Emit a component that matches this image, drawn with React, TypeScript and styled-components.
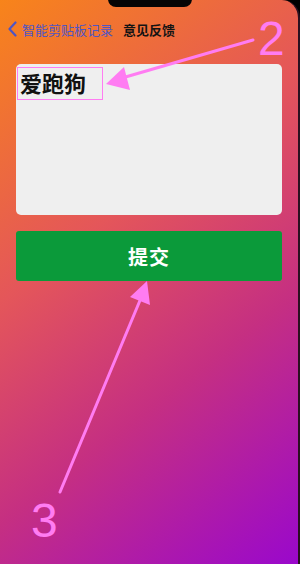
import styled, { createGlobalStyle } from "styled-components";

const GlobalStyle = createGlobalStyle`
    html, body {
        margin: 0;
        padding: 0;
        background: #000;
    }
    * {
        box-sizing: border-box;
    }
`;

const Screen = styled.div`
    position: relative;
    width: 300px;
    height: 564px;
    overflow: hidden;
    font-family: "Noto Sans CJK SC", "Noto Sans", sans-serif;
    background: linear-gradient(142deg, #f8841a 0%, #e4565a 38%, #c52f82 66%, #9a08cc 100%);
    border-top-right-radius: 18px;
    border-right: 2px solid #2a1020;
`;

const Notch = styled.div`
    position: absolute;
    top: -10px;
    left: 108px;
    width: 84px;
    height: 17px;
    background: #050505;
    border-radius: 8px;
`;

const NavBar = styled.nav`
    display: flex;
    align-items: center;
    height: 20px;
    margin-top: 19px;
    padding: 0 7px;
    gap: 10px;
`;

const Back = styled.a`
    display: flex;
    align-items: center;
    gap: 4px;
    color: #4f55c4;
    font-size: 13px;
    text-decoration: none;
`;

const Title = styled.span`
    color: #141414;
    font-size: 13px;
    font-weight: 700;
`;

const Body = styled.main`
    display: flex;
    flex-direction: column;
    gap: 16px;
    padding: 25px 16px 0;
`;

const TextBox = styled.div`
    height: 151px;
    background: #efefef;
    border-radius: 5px;
    padding: 3px 4px;
    font-size: 22px;
    font-weight: 700;
    line-height: 30px;
    color: #111;
`;

const Submit = styled.button`
    height: 50px;
    border: none;
    border-radius: 3px;
    background: #0b9a3a;
    color: #fff;
    font-family: inherit;
    font-size: 20px;
    font-weight: 700;
    letter-spacing: 1px;
`;

const Overlay = styled.svg`
    position: absolute;
    left: 0;
    top: 0;
    pointer-events: none;
`;

const Label = styled.text`
    font-family: "Liberation Sans", Arial, sans-serif;
    font-size: 48px;
    fill: #ff7cf2;
`;

export default function App() {
    return (
        <>
            <GlobalStyle />
            <Screen>
                <Notch />
                <NavBar>
                    <Back href="#">
                        <svg width="11" height="16" viewBox="0 0 11 16">
                            <path d="M8.5 1.5 L2.5 8 L8.5 14.5" fill="none" stroke="#4f55c4" strokeWidth="2.2" strokeLinecap="round" strokeLinejoin="round" />
                        </svg>
                        智能剪贴板记录
                    </Back>
                    <Title>意见反馈</Title>
                </NavBar>
                <Body>
                    <TextBox>爱跑狗</TextBox>
                    <Submit>提交</Submit>
                </Body>
                <Overlay width="300" height="564" viewBox="0 0 300 564">
                    <rect x="17.5" y="67.5" width="85" height="32" fill="none" stroke="#ff7cf2" strokeWidth="1" />
                    <line x1="253" y1="40" x2="122" y2="78" stroke="#ff7cf2" strokeWidth="3" strokeLinecap="round" />
                    <polygon points="106,84 124,67 130,90" fill="#ff7cf2" />
                    <line x1="60" y1="492" x2="141" y2="298" stroke="#ff7cf2" strokeWidth="3" strokeLinecap="round" />
                    <polygon points="147,281 130,297 150,305" fill="#ff7cf2" />
                    <Label x="258" y="55">2</Label>
                    <Label x="31" y="537">3</Label>
                </Overlay>
            </Screen>
        </>
    );
}
